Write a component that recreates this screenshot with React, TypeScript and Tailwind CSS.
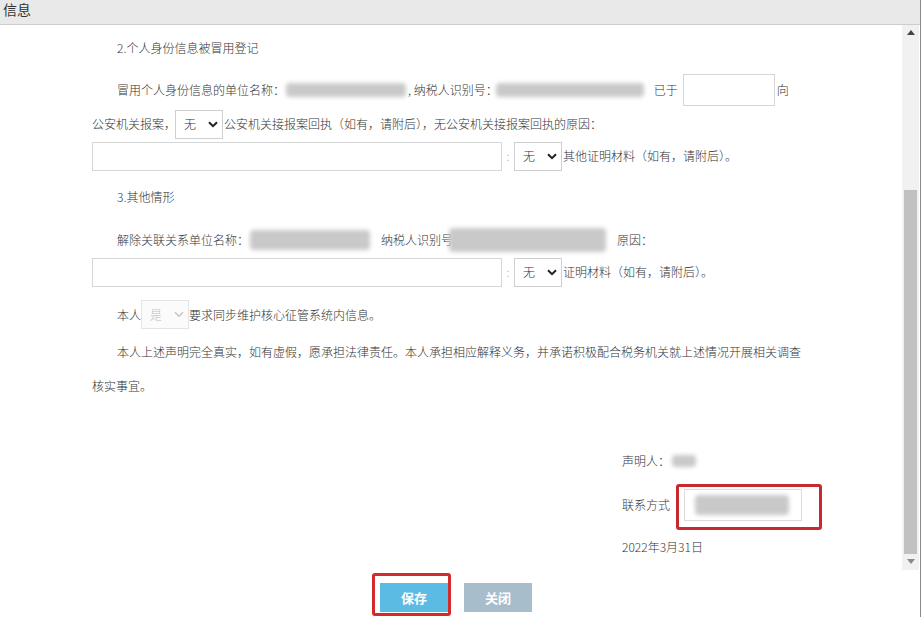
import React from "react";

const FONT = { fontFamily: '"Noto Sans CJK SC", "Noto Sans", sans-serif' };

function Chevron({ light }: { light?: boolean }) {
  return (
    <svg width="10" height="7" viewBox="0 0 10 7" className="shrink-0">
      <path
        d="M1 1.2 L5 5.2 L9 1.2"
        fill="none"
        stroke={light ? "#c4c4c4" : "#222"}
        strokeWidth={light ? 1.4 : 2}
      />
    </svg>
  );
}

function Select({ value, disabled }: { value: string; disabled?: boolean }) {
  return (
    <div
      className={`flex h-[29px] w-[48px] items-center justify-between border pl-[8px] pr-[4px] ${
        disabled ? "border-[#e4e4e4] bg-[#fbfbfb] text-[#bdbdbd]" : "border-[#cfcfcf] bg-white text-[#333]"
      }`}
    >
      <span>{value}</span>
      <Chevron light={disabled} />
    </div>
  );
}

function Blur({ w, h = 14, className = "" }: { w: number; h?: number; className?: string }) {
  return (
    <div className={`flex items-center ${className}`} style={{ width: w }}>
      <div className="w-full rounded-sm bg-[#c9c9c9] blur-[2px]" style={{ height: h }} />
    </div>
  );
}

export default function App() {
  return (
    <div
      lang="zh-CN"
      className="relative flex h-[617px] w-[921px] flex-col overflow-hidden bg-white text-[12px] font-light text-[#333]"
      style={FONT}
    >
      {/* title bar */}
      <div className="h-[25px] shrink-0 border-b border-[#cdcdcd] bg-[#e9e9e9] pr-[2px]">
        <div className="pl-[3px] pt-[1px] text-[14px] font-normal leading-[16px] text-[#333]">信息</div>
      </div>

      <div className="flex min-h-0 flex-1">
        {/* scroll body */}
        <div className="relative flex-1">
          <div className="flex flex-col whitespace-nowrap pl-[92px]">
            <div className="mt-[11px] flex h-[24px] items-center pl-[25px]">2.个人身份信息被冒用登记</div>

            <div className="mt-[14px] flex h-[32px] items-center pl-[25px]">
              <span>冒用个人身份信息的单位名称：</span>
              <Blur w={120} className="ml-[1px]" />
              <span className="ml-[2px]">,&nbsp;纳税人识别号：</span>
              <Blur w={148} className="ml-[-2px]" />
              <span className="ml-[10px]">已于</span>
              <div className="ml-[5px] h-[32px] w-[92px] border border-[#d6d6d6] bg-white" />
              <span className="ml-[2px]">向</span>
            </div>

            <div className="mt-[3px] flex h-[30px] items-center">
              <span>公安机关报案，</span>
              <div className="ml-[-1px]">
                <Select value="无" />
              </div>
              <span className="ml-[1px]">公安机关接报案回执（如有，请附后），无公安机关接报案回执的原因：</span>
            </div>

            <div className="mt-[2px] flex h-[30px] items-center">
              <div className="h-[29px] w-[410px] border border-[#d6d6d6] bg-white" />
              <span className="w-[12px] text-center text-[#999]">:</span>
              <Select value="无" />
              <span className="ml-[1px]">其他证明材料（如有，请附后）。</span>
            </div>

            <div className="mt-[14px] flex h-[24px] items-center pl-[25px]">3.其他情形</div>

            <div className="mt-[17px] flex h-[28px] items-center pl-[25px]">
              <span>解除关联关系单位名称：</span>
              <Blur w={120} h={20} className="ml-[1px]" />
              <span className="ml-[11px]">纳税人识别号</span>
              <Blur w={157} h={24} className="ml-[-4px]" />
              <span className="ml-[11px]">原因：</span>
            </div>

            <div className="mt-[3px] flex h-[30px] items-center">
              <div className="h-[29px] w-[410px] border border-[#d6d6d6] bg-white" />
              <span className="w-[12px] text-center text-[#999]">:</span>
              <Select value="无" />
              <span className="ml-[1px]">证明材料（如有，请附后）。</span>
            </div>

            <div className="mt-[13px] flex h-[29px] items-center pl-[25px]">
              <span>本人</span>
              <Select value="是" disabled />
              <span>要求同步维护核心征管系统内信息。</span>
            </div>

            <div className="mt-[11px] flex h-[24px] items-center pl-[25px]">
              本人上述声明完全真实，如有虚假，愿承担法律责任。本人承担相应解释义务，并承诺积极配合税务机关就上述情况开展相关调查
            </div>
            <div className="mt-[10px] flex h-[24px] items-center">核实事宜。</div>

            {/* signature */}
            <div className="ml-[530px] flex flex-col">
              <div className="mt-[51px] flex h-[24px] items-center">
                <span>声明人：</span>
                <Blur w={24} h={12} className="ml-[2px]" />
              </div>
              <div className="mt-[9px] flex h-[46px] items-center">
                <span>联系方式</span>
                <div className="relative ml-[14px] h-[32px] w-[118px] border border-[#dcdcdc] bg-white">
                  <Blur w={94} h={20} className="ml-[10px] mt-[5px]" />
                  <div className="absolute -left-[9px] -top-[6px] h-[46px] w-[146px] rounded-[3px] border-[3px] border-[#c62a2f]" />
                </div>
              </div>
              <div className="mt-[7px] flex h-[24px] items-center">2022年3月31日</div>
            </div>
          </div>
        </div>

        {/* scrollbar */}
        <div className="flex w-[17px] shrink-0 flex-col items-center bg-[#f1f1f1] pb-[6px] pt-[5px]">
          <svg width="8" height="5" viewBox="0 0 8 5">
            <path d="M0 5 L4 0 L8 5 Z" fill="#444" />
          </svg>
          <div className="mt-[155px] w-[13px] flex-1 bg-[#c1c1c1]" />
          <svg width="8" height="5" viewBox="0 0 8 5" className="mt-[5px]">
            <path d="M0 0 L4 5 L8 0 Z" fill="#8a8a8a" />
          </svg>
        </div>
        <div className="w-[2px] shrink-0 bg-white" />
      </div>

      {/* footer */}
      <div className="flex h-[47px] shrink-0 items-start gap-[16px] pl-[380px] pt-[13px]">
        <div className="relative">
          <button className="h-[29px] w-[68px] bg-[#5cbbe2] text-[13px] font-bold text-white">保存</button>
          <div className="absolute -left-[8px] -top-[10px] h-[43px] w-[79px] rounded-[3px] border-[3px] border-[#d12b2b]" />
        </div>
        <button className="h-[29px] w-[68px] bg-[#a8bdcc] text-[13px] font-bold text-white">关闭</button>
      </div>
      <div className="absolute right-0 top-0 h-full w-[1px] bg-[#8a8a8a]" />
    </div>
  );
}
